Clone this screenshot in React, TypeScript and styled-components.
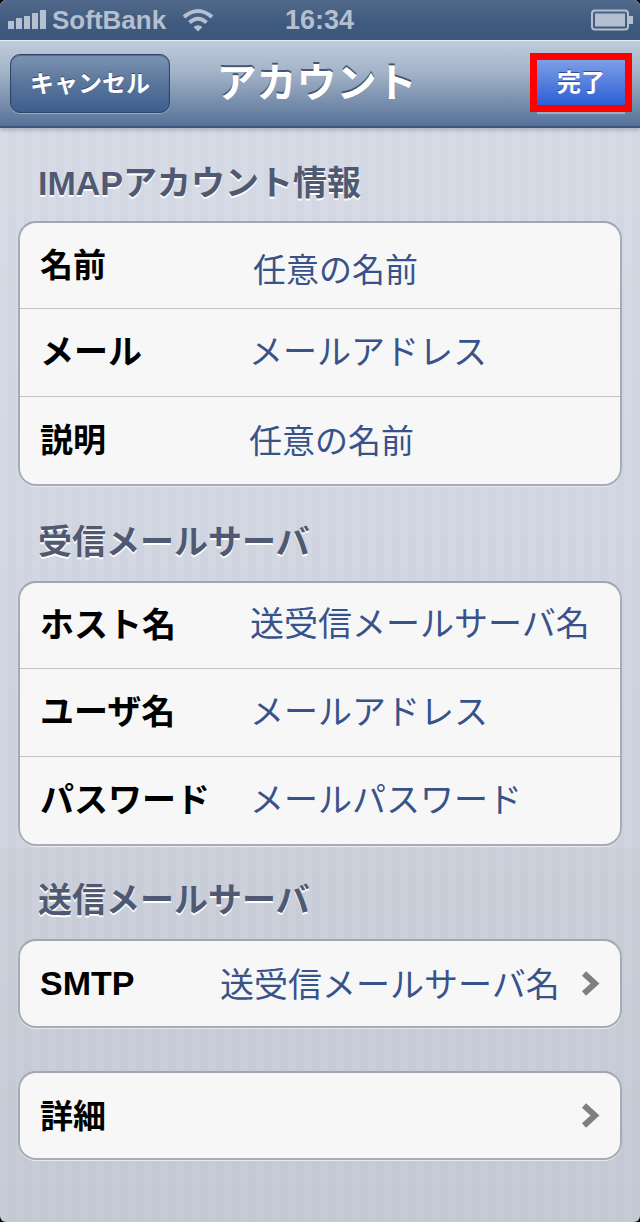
import React from "react";
import styled, { createGlobalStyle } from "styled-components";

const FONT = `"Liberation Sans", "Noto Sans CJK JP", sans-serif`;

const Global = createGlobalStyle`
  html, body { margin: 0; padding: 0; background: #000; }
  body { font-family: ${FONT}; }
`;

const Screen = styled.div`
  width: 640px;
  height: 1222px;
  overflow: hidden;
  border-radius: 6px;
  display: flex;
  flex-direction: column;
  background:
    repeating-linear-gradient(90deg, rgba(255,255,255,0) 0 8px, rgba(90,100,130,0.03) 8px 16px),
    linear-gradient(180deg, #d9dde7 0, #d0d4e0 848px, #cdd1db 849px, #c6cbd6 1222px);
`;

const StatusBar = styled.div`
  height: 40px;
  box-sizing: border-box;
  padding: 0 6px 0 8px;
  display: flex;
  align-items: center;
  background: linear-gradient(180deg, #516a8b 0, #3f5a7f 60%, #3c577c 100%);
  color: #b4bfcf;
  font-size: 26px;
  font-weight: 700;
`;

const Carrier = styled.span`
  margin-left: 6px;
  width: 130px;
`;

const Clock = styled.span`
  margin-left: 71px;
  flex: 1;
  font-size: 27px;
`;

const NavBar = styled.div`
  height: 88px;
  box-sizing: border-box;
  padding: 13px 8px 14px 10px;
  display: flex;
  align-items: flex-start;
  justify-content: space-between;
  border-top: 1px solid #e9eef5;
  border-bottom: 2px solid #3f5577;
  background: linear-gradient(180deg, #bfccdc 0, #a5b4c9 35%, #6f86a6 80%, #54709a 100%);
  box-shadow: 0 3px 3px rgba(60, 70, 90, 0.22);
`;

const CancelButton = styled.div`
  width: 160px;
  height: 59px;
  box-sizing: border-box;
  display: flex;
  align-items: center;
  justify-content: center;
  border-radius: 10px;
  border: 1px solid #2f4668;
  background: linear-gradient(180deg, #7d94b3 0, #5d789d 45%, #3d5e8d 100%);
  box-shadow: 0 1px 0 rgba(255, 255, 255, 0.3), inset 0 1px 1px rgba(30, 40, 60, 0.4);
  color: #fff;
  font-size: 24px;
  font-weight: 700;
  padding-bottom: 4px;
  text-shadow: 0 -1px 0 rgba(30, 50, 80, 0.7);
`;

const Title = styled.div`
  font-size: 40px;
  line-height: 56px;
  font-weight: 700;
  color: #fff;
  text-shadow: 0 -2px 0 #47566f;
  margin-right: 67px;
  padding-top: 1px;
`;

const DoneButton = styled.div`
  width: 102px;
  height: 59px;
  box-sizing: border-box;
  margin-top: -1px;
  padding-bottom: 4px;
  border: 7px solid #fe0000;
  display: flex;
  align-items: center;
  justify-content: center;
  background: linear-gradient(180deg, #7d9fe8 0, #5a82de 45%, #2b5ed6 100%);
  box-shadow: 0 9px 1px -7px rgba(255, 255, 255, 0.35);
  color: #fff;
  font-size: 24px;
  font-weight: 700;
  text-shadow: 0 -1px 0 rgba(30, 50, 110, 0.7);
`;

const Content = styled.div`
  flex: 1;
  padding: 0 18px;
  display: flex;
  flex-direction: column;
`;

const SectionTitle = styled.div<{ $top: number }>`
  margin-top: ${(p) => p.$top}px;
  padding-left: 20px;
  height: 48px;
  line-height: 48px;
  font-size: 34px;
  font-weight: 700;
  color: #4f5a72;
  text-shadow: 0 2px 0 #fff;
  white-space: nowrap;
`;

const Group = styled.div<{ $top?: number }>`
  margin-top: ${(p) => p.$top ?? 0}px;
  border-radius: 18px;
  background: #f7f7f7;
  border: 2px solid #a7abb6;
  border-top-color: #a2a6b1;
  box-shadow: 0 1px 0 #e8eaf0;
  overflow: hidden;
`;

const Row = styled.div`
  height: 85px;
  box-sizing: border-box;
  display: flex;
  align-items: center;
  padding-left: 20px;
  padding-right: 20px;
  & + & {
    height: 88px;
    border-top: 1px solid #c3c3c3;
  }
`;

const Label = styled.span<{ $width: number; $shift?: number; $size?: number }>`
  width: ${(p) => p.$width}px;
  flex: none;
  font-size: ${(p) => p.$size ?? 34}px;
  font-weight: 700;
  color: #000;
  white-space: nowrap;
  transform: translateY(${(p) => p.$shift ?? 0}px);
`;

const Value = styled.span<{ $shift?: number; $size?: number }>`
  flex: 1;
  font-size: ${(p) => p.$size ?? 34}px;
  color: #375389;
  white-space: nowrap;
  transform: translateY(${(p) => p.$shift ?? 0}px);
`;

const Chevron = styled.svg`
  width: 19px;
  height: 27px;
  flex: none;
`;

const Arrow = () => (
  <Chevron viewBox="0 0 19 27">
    <path d="M3 3.5 L14 13.5 L3 23.5" fill="none" stroke="#7f7f7f" strokeWidth="6" />
  </Chevron>
);

const SignalSvg = styled.svg`
  width: 38px;
  height: 22px;
  flex: none;
`;

const WifiSvg = styled.svg`
  width: 32px;
  height: 24px;
  flex: none;
`;

const BatterySvg = styled.svg`
  width: 44px;
  height: 22px;
  flex: none;
`;

export default function App() {
  return (
    <>
      <Global />
      <Screen>
        <StatusBar>
          <SignalSvg viewBox="0 0 38 22">
            <rect x="0" y="12" width="6" height="8" fill="#b4bfcf" />
            <rect x="8" y="9" width="6" height="11" fill="#b4bfcf" />
            <rect x="16" y="7" width="6" height="13" fill="#b4bfcf" />
            <rect x="24" y="4" width="6" height="16" fill="#b4bfcf" />
            <rect x="32" y="1" width="6" height="19" fill="#b4bfcf" />
          </SignalSvg>
          <Carrier>SoftBank</Carrier>
          <WifiSvg viewBox="0 0 32 24">
            <path d="M2 9 Q16 -3 30 9" fill="none" stroke="#b4bfcf" strokeWidth="4" />
            <path d="M7.5 14.5 Q16 7 24.5 14.5" fill="none" stroke="#b4bfcf" strokeWidth="4" />
            <path d="M11.5 19 Q16 15.5 20.5 19 L16 23.5 Z" fill="#b4bfcf" />
          </WifiSvg>
          <Clock>16:34</Clock>
          <BatterySvg viewBox="0 0 44 22">
            <rect x="2" y="1.5" width="36" height="19" rx="3" fill="none" stroke="#b4bfcf" strokeWidth="2" />
            <rect x="5" y="4.5" width="30" height="13" fill="#b4bfcf" />
            <rect x="39" y="7" width="4" height="8" fill="#b4bfcf" />
          </BatterySvg>
        </StatusBar>
        <NavBar>
          <CancelButton>キャンセル</CancelButton>
          <Title>アカウント</Title>
          <DoneButton>完了</DoneButton>
        </NavBar>
        <Content>
          <SectionTitle $top={31}>IMAPアカウント情報</SectionTitle>
          <Group $top={14}>
            <Row>
              <Label $width={213} $shift={-3} $size={33}>名前</Label>
              <Value $shift={2} $size={33}>任意の名前</Value>
            </Row>
            <Row>
              <Label $width={209} $shift={-3}>メール</Label>
              <Value $shift={-3}>メールアドレス</Value>
            </Row>
            <Row>
              <Label $width={209} $shift={-3} $size={33}>説明</Label>
              <Value $shift={-2} $size={33}>任意の名前</Value>
            </Row>
          </Group>
          <SectionTitle $top={32}>受信メールサーバ</SectionTitle>
          <Group $top={15}>
            <Row>
              <Label $width={210} $shift={-3}>ホスト名</Label>
              <Value $shift={-4}>送受信メールサーバ名</Value>
            </Row>
            <Row>
              <Label $width={210} $shift={-3}>ユーザ名</Label>
              <Value $shift={-3}>メールアドレス</Value>
            </Row>
            <Row>
              <Label $width={210} $shift={-3}>パスワード</Label>
              <Value $shift={-3}>メールパスワード</Value>
            </Row>
          </Group>
          <SectionTitle $top={30}>送信メールサーバ</SectionTitle>
          <Group $top={15}>
            <Row>
              <Label $width={180}>SMTP</Label>
              <Value $shift={-1}>送受信メールサーバ名</Value>
              <Arrow />
            </Row>
          </Group>
          <Group $top={43}>
            <Row>
              <Label $width={180} $shift={-2} $size={33}>詳細</Label>
              <Value />
              <Arrow />
            </Row>
          </Group>
        </Content>
      </Screen>
    </>
  );
}
